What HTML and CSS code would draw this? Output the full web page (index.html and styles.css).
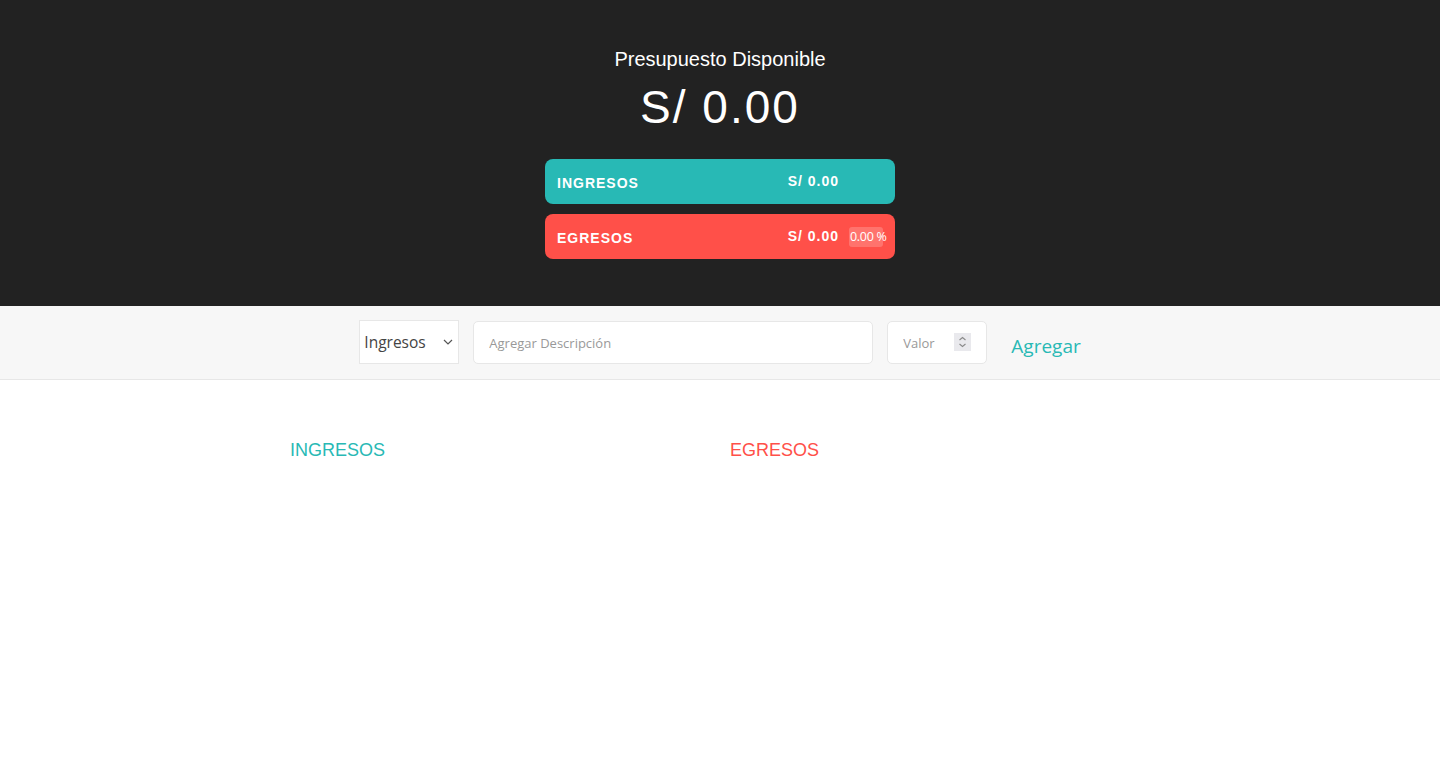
FILE: index.html
```html
<!DOCTYPE html>
<html lang="es">
<head>
<meta charset="utf-8">
<title>Presupuesto</title>
<link rel="stylesheet" href="styles.css">
</head>
<body>
  <header class="top">
    <div class="budget">
      <div class="budget__title">Presupuesto Disponible</div>
      <div class="budget__value">S/ 0.00</div>
      <div class="budget__row budget__row--income">
        <div class="budget__label">Ingresos</div>
        <div class="budget__right">
          <div class="budget__amount">S/ 0.00</div>
          <div class="budget__pct budget__pct--empty"></div>
        </div>
      </div>
      <div class="budget__row budget__row--expense">
        <div class="budget__label">Egresos</div>
        <div class="budget__right">
          <div class="budget__amount">S/ 0.00</div>
          <div class="budget__pct">0.00 %</div>
        </div>
      </div>
    </div>
  </header>

  <section class="add">
    <form class="add__form">
      <span class="add__typewrap">
        <select class="add__type">
          <option>Ingresos</option>
          <option>Egresos</option>
        </select>
        <svg class="add__arrow" width="10" height="6" viewBox="0 0 10 6" aria-hidden="true">
          <path d="M1 1 L5 5 L9 1" fill="none" stroke="#555" stroke-width="1.2"/>
        </svg>
      </span>
      <input class="add__desc" type="text" placeholder="Agregar Descripción">
      <span class="add__valuewrap">
        <input class="add__value" type="number" placeholder="Valor">
        <span class="add__spin" aria-hidden="true">
          <svg width="17" height="18" viewBox="0 0 17 18">
            <path d="M5.5 7 L8.5 4.5 L11.5 7" fill="none" stroke="#8a8a8a" stroke-width="1.1"/>
            <path d="M5.5 11 L8.5 13.5 L11.5 11" fill="none" stroke="#8a8a8a" stroke-width="1.1"/>
          </svg>
        </span>
      </span>
      <button class="add__btn" type="button">Agregar</button>
    </form>
  </section>

  <main class="lists">
    <div class="list">
      <h2 class="list__title list__title--income">Ingresos</h2>
    </div>
    <div class="list">
      <h2 class="list__title list__title--expense">Egresos</h2>
    </div>
  </main>
</body>
</html>
```

FILE: styles.css
```css
* { box-sizing: border-box; }

html, body {
  margin: 0;
  padding: 0;
  background: #fff;
  font-family: "Liberation Sans", Arial, sans-serif;
}

.top {
  background: #222;
  color: #fff;
  padding: 47px 0 47px;
}

.budget {
  width: 350px;
  margin: 0 auto;
  text-align: center;
}

.budget__title {
  font-size: 20px;
  line-height: 24px;
}

.budget__value {
  font-size: 46px;
  line-height: 56px;
  letter-spacing: 2px;
  margin-top: 8px;
  margin-bottom: 24px;
}

.budget__row {
  height: 45px;
  border-radius: 8px;
  padding: 0 12px;
  display: flex;
  align-items: center;
  justify-content: space-between;
  text-transform: uppercase;
}

.budget__row + .budget__row { margin-top: 10px; }

.budget__row--income { background: #28B9B5; }
.budget__row--expense { background: #FF5049; }

.budget__label {
  font-size: 14px;
  font-weight: bold;
  letter-spacing: 1px;
  margin-top: 2px;
}

.budget__right {
  display: flex;
  align-items: center;
}

.budget__amount {
  font-size: 14px;
  font-weight: bold;
  letter-spacing: 1px;
  margin-top: -2px;
}

.budget__pct {
  width: 34px;
  margin-left: 10px;
  padding: 3px 0 3px 1px;
  font-size: 12.5px;
  line-height: 14px;
  border-radius: 3px;
  background: rgba(255, 255, 255, 0.2);
  text-align: left;
  white-space: nowrap;
  font-family: "Open Sans", "Liberation Sans", sans-serif;
  letter-spacing: -0.3px;
}

.budget__pct--empty {
  background: transparent;
  height: 20px;
}

.add {
  background: #f7f7f7;
  border-bottom: 1px solid #e7e7e7;
  height: 74px;
}

.add__form {
  height: 73px;
  display: flex;
  align-items: center;
  justify-content: center;
  padding-left: 0;
  font-family: "Open Sans", sans-serif;
}

.add__typewrap {
  position: relative;
  display: block;
  margin-top: -1px;
}

.add__type {
  display: block;
  width: 100px;
  height: 44px;
  border: 1px solid #e7e7e7;
  background: #fff;
  color: #444;
  font-family: "Open Sans", sans-serif;
  font-size: 15.5px;
  padding: 0 0 0 4px;
  border-radius: 0;
  -webkit-appearance: none;
  appearance: none;
  outline: none;
}

.add__arrow {
  position: absolute;
  right: 6px;
  top: 19px;
  pointer-events: none;
}

.add__desc,
.add__value {
  height: 43px;
  border: 1px solid #e7e7e7;
  border-radius: 5px;
  background: #fff;
  padding: 0 15px;
  font-family: "Open Sans", sans-serif;
  font-size: 13px;
  color: #444;
  outline: none;
}

.add__desc { width: 400px; margin-left: 14px; }
.add__value { width: 100px; display: block; }

.add__valuewrap {
  position: relative;
  margin-left: 14px;
  display: block;
}

.add__value::-webkit-inner-spin-button,
.add__value::-webkit-outer-spin-button {
  -webkit-appearance: none;
  margin: 0;
}

.add__spin {
  position: absolute;
  right: 16px;
  top: 12px;
  width: 17px;
  height: 18px;
  background: #e9e9ed;
  display: block;
}

.add__spin svg { display: block; }

.add__desc::placeholder,
.add__value::placeholder { color: #999; }

.add__btn {
  margin-left: 24px;
  margin-top: 6px;
  background: none;
  border: none;
  padding: 0;
  color: #28B9B5;
  font-family: "Open Sans", sans-serif;
  font-size: 19px;
  cursor: pointer;
}

.lists {
  width: 860px;
  margin: 0 auto;
  padding-top: 59px;
  display: flex;
  gap: 20px;
}

.list { flex: 1; }

.list__title {
  margin: 0;
  font-size: 18px;
  line-height: 22px;
  font-weight: normal;
  text-transform: uppercase;
}

.list__title--income { color: #28B9B5; }
.list__title--expense { color: #FF5049; }
```
